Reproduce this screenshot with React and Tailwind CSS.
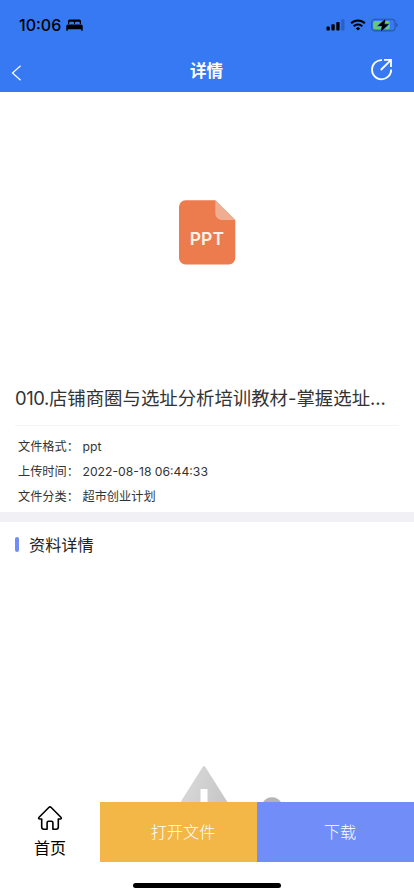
const sans = "font-['Inter','Noto_Sans_CJK_SC',sans-serif]";

function StatusBar() {
  return (
    <div className="flex h-[50px] items-center justify-between pl-[19px] pr-[16px] text-black">
      <div className="flex items-center gap-[5px]">
        <span className="text-[16px] leading-5 font-medium">10:06</span>
        <svg width="17" height="12" viewBox="0 0 17 12" fill="currentColor">
          <path d="M2 5V2a1.6 1.6 0 0 1 1.6-1.6h9.8A1.6 1.6 0 0 1 15 2v3h-1.2V3.8c0-.7-.4-1.1-1.1-1.1H10c-.7 0-1 .4-1 1.1V5H8V3.8c0-.7-.4-1.1-1.1-1.1H4.300c-.7 0-1.100.4-1.100 1.100V5z" />
          <path d="M1.800 5.500h13.400A1.500 1.500 0 0 1 16.700 7v4.800h-1.500v-1.600H1.800v1.600H.3V7a1.500 1.500 0 0 1 1.500-1.500z" />
        </svg>
      </div>
      <div className="flex items-center gap-[5px]">
        <svg width="19" height="12" viewBox="0 0 19 12">
          <rect x="0.500" y="7.500" width="3.300" height="4" rx="0.900" />
          <rect x="5.400" y="5.300" width="3.300" height="6.200" rx="0.900" />
          <rect x="10.300" y="2.900" width="3.300" height="8.600" rx="0.900" />
          <rect x="15.200" y="0.300" width="3.300" height="11.200" rx="0.900" fill="#2862c5" />
        </svg>
        <svg width="16" height="12" viewBox="0 0 16 12" fill="none" stroke="currentColor" strokeWidth="2">
          <path d="M1.100 4.300a9.800 9.800 0 0 1 13.800 0" />
          <path d="M3.700 7.200a6.100 6.100 0 0 1 8.600 0" />
          <path d="M8 11.600 5.800 9.400a3.100 3.100 0 0 1 4.400 0z" fill="currentColor" stroke="none" />
        </svg>
        <svg width="27" height="14" viewBox="0 0 27 14">
          <rect x="0.600" y="1.300" width="23.400" height="11.600" rx="3.400" fill="none" stroke="#2457ab" strokeWidth="1.100" />
          <path d="M25.200 5v4.200c1-.4 1.500-1.200 1.500-2.100s-.5-1.700-1.500-2.100z" fill="#2457ab" />
          <rect x="2.200" y="2.900" width="16.600" height="8.400" rx="2" fill="#66cc6b" />
          <path d="M14.500.7 6.800 8h4.200l-1.200 5.700L17.800 6.200h-4.400z" fill="#000" stroke="#3779f2" strokeWidth="1.200" paintOrder="stroke" />
        </svg>
      </div>
    </div>
  );
}

function NavBar() {
  return (
    <div className="grid h-[42px] grid-cols-3 items-center pr-[21px] pl-[11px] text-white">
      <svg className="mt-[3px]" width="11" height="16" viewBox="0 0 11 16" fill="none" stroke="currentColor" strokeWidth="1.200">
        <path d="M9.600.8 1.500 8l8.100 7.200" />
      </svg>
      <h1 className="pl-[9px] text-center text-[16.500px] leading-6 font-bold">详情</h1>
      <svg className="-mt-[3px] justify-self-end" width="23" height="23" viewBox="0 0 23 23" fill="none" stroke="currentColor" strokeWidth="1.800">
        <path d="M12 2.100a9.600 9.600 0 1 0 9.200 9.500" />
        <path d="M14 1.900h7v7M20.800 2.100 10.800 12" />
      </svg>
    </div>
  );
}

function PptIcon() {
  return (
    <svg width="57" height="65" viewBox="0 0 57 65">
      <path d="M6.500.300H36.300L56.300 20v38a6.500 6.500 0 0 1-6.500 6.500H6.500A6.500 6.500 0 0 1 0 58V6.800A6.500 6.500 0 0 1 6.500.300z" fill="#ec7c4e" />
      <path d="M36.300.300 56.300 20H42.800a6.500 6.500 0 0 1-6.500-6.500z" fill="#f1ad91" />
      <text x="27.900" y="45" textAnchor="middle" className="fill-[#fff3e8] font-['Inter',sans-serif] text-[17.500px] font-semibold">PPT</text>
    </svg>
  );
}

const details = [
  ["文件格式：", "ppt"],
  ["上传时间：", "2022-08-18 06:44:33"],
  ["文件分类：", "超市创业计划"],
];

export default function App() {
  return (
    <div className={`flex h-[896px] w-[414px] flex-col overflow-hidden bg-white text-[#333] ${sans}`}>
      <header className="h-[92px] shrink-0 bg-[#3779f2]">
        <StatusBar />
        <NavBar />
      </header>
      <main className="flex h-[710px] shrink-0 flex-col overflow-hidden">
        <div className="flex h-[280px] shrink-0 items-center justify-center">
          <PptIcon />
        </div>
        <h2 className="mx-[15px] h-[54px] shrink-0 border-b border-[#f5f5f5] pt-[12px] text-[18.400px] leading-[28px] whitespace-nowrap">
          <span className="tracking-[-0.400px]">010.</span>店铺商圈与选址分析培训教材-掌握选址...
        </h2>
        <dl className="flex h-[86px] shrink-0 flex-col pt-[8px] pl-[18px] text-[12.200px] leading-[25px]">
          {details.map(([label, value]) => (
            <div key={label} className="flex">
              <dt className="w-[64.500px]">{label}</dt>
              <dd>{value}</dd>
            </div>
          ))}
        </dl>
        <div className="h-[10px] shrink-0 bg-[#f0f0f5]" />
        <div className="flex h-[45px] shrink-0 items-center gap-[10px] pl-[15px]">
          <span className="h-[15px] w-[4px] rounded-[2px] bg-[#718df8]" />
          <h3 className="text-[16.200px] leading-6 text-[#222]">资料详情</h3>
        </div>
        <svg className="mt-[199px] ml-[174px] shrink-0" width="120" height="50" viewBox="0 0 120 50">
          <defs>
            <linearGradient id="warning" x1="0" x2="1" y1="0" y2="0.300">
              <stop offset="0" stopColor="#dedede" />
              <stop offset="1" stopColor="#c6c6c6" />
            </linearGradient>
          </defs>
          <path d="M28.500 1.200Q30 -1 31.500 1.200L61 48H-1z" fill="url(#warning)" />
          <rect x="26.500" y="23" width="7" height="25" fill="#fff" />
          <ellipse cx="98" cy="39.500" rx="9.800" ry="8.300" fill="#b4b4b4" />
        </svg>
      </main>
      <footer className="flex h-[94px] shrink-0 flex-col items-center">
        <div className="flex h-[60px] w-full">
          <button className="flex w-[100px] flex-col items-center pt-[3px] text-black">
            <svg width="26" height="26" viewBox="0 0 26 26" fill="none" stroke="currentColor" strokeWidth="1.600" strokeLinecap="round" strokeLinejoin="round">
              <path d="M4.700 14H2.800c-1.200 0-1.500-.9-.7-1.700L11.800 2.500c.8-.8 1.600-.8 2.400 0l9.700 9.800c.8.8.5 1.700-.7 1.700h-1.900v8c0 1.500-.7 2.200-2.200 2.200h-3.200v-6.500c0-1-.5-1.500-1.500-1.500h-2.800c-1 0-1.500.5-1.500 1.500v6.500H6.900c-1.500 0-2.200-.7-2.200-2.200z" />
            </svg>
            <span className="mt-[5px] text-[16px] leading-6">首页</span>
          </button>
          <button className="w-[157px] bg-[#f2b746] pl-[9px] text-[16.200px] font-light text-white">打开文件</button>
          <button className="w-[157px] bg-[#708df8] pl-[9px] text-[16.200px] font-light text-white">下载</button>
        </div>
        <div className="mt-[21px] h-[5px] w-[148px] rounded-full bg-black" />
      </footer>
    </div>
  );
}
